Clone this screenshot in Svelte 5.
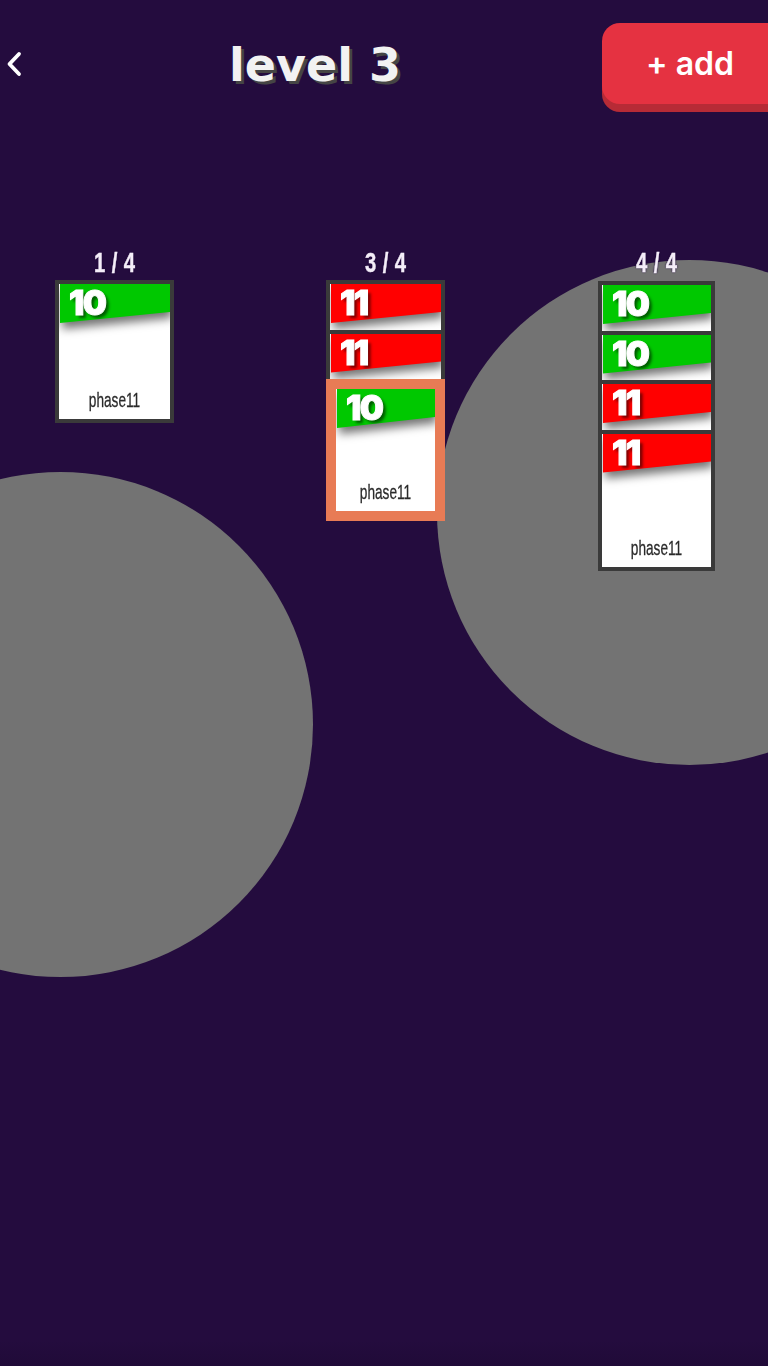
<script>
  const g = { n: '10', c: 'green' };
  const r = { n: '11', c: 'red' };
  const columns = [
    { label: '1 / 4', cards: [g], selected: false, narrow: false },
    { label: '3 / 4', cards: [r, r, g], selected: true, narrow: false },
    { label: '4 / 4', cards: [g, g, r, r], selected: false, narrow: true }
  ];
</script>

<div class="page">
  <div class="circle left"></div>
  <div class="circle right"></div>

  <header class="top">
    <button class="back" aria-label="back">
      <svg width="16" height="26" viewBox="0 0 16 26" fill="none">
        <path d="M13 3 L3.5 13 L13 23" stroke="#fff" stroke-width="3.8" stroke-linecap="round" stroke-linejoin="round" />
      </svg>
    </button>
    <h1 class="title">level 3</h1>
    <button class="add">+ add</button>
  </header>

  <main class="board">
    {#each columns as col}
      <section class="col" class:narrow={col.narrow}>
        <div class="label">{col.label}</div>
        <div class="stack">
          {#each col.cards as card, i}
            {@const last = i === col.cards.length - 1}
            <div class="slot" class:collapsed={!last}>
              <div class="card" class:selected={last && col.selected}>
                <div class="ribbon-wrap">
                  <div class="ribbon {card.c}"><span class="num">{card.n}</span></div>
                </div>
                {#if last}
                  <div class="name">phase11</div>
                {/if}
              </div>
            </div>
          {/each}
        </div>
      </section>
    {/each}
  </main>
</div>

<style>
  :global(body) {
    margin: 0;
    background: #240c3e;
  }
  .page {
    position: relative;
    width: 768px;
    height: 1366px;
    overflow: hidden;
    background: linear-gradient(#240c3e 0, #240c3e 1340px, #200a38 1366px);
    font-family: "Inter", sans-serif;
  }
  .circle {
    position: absolute;
    width: 505px;
    height: 505px;
    border-radius: 50%;
    background: #737373;
  }
  .circle.left { left: -192px; top: 472px; }
  .circle.right { left: 437px; top: 260px; }

  .top {
    position: relative;
    display: flex;
    align-items: center;
    height: 89px;
    padding-top: 23px;
  }
  .back {
    display: flex;
    align-items: center;
    width: 16px;
    margin-left: 6px;
    padding: 0;
    border: 0;
    background: none;
    position: relative;
    top: -4px;
  }
  .title {
    margin: 0 0 0 207px;
    color: #f2f2f2;
    font-family: "DejaVu Sans", sans-serif;
    font-size: 46px;
    font-weight: 700;
    letter-spacing: 0;
    line-height: 1;
    text-shadow: 3px 3px 0 #454545;
    position: relative;
    top: -3px;
    white-space: nowrap;
  }
  .add {
    margin-left: auto;
    width: 166px;
    height: 81px;
    align-self: flex-start;
    padding: 0 0 0 10px;
    border: 0;
    border-radius: 18px 0 0 18px;
    background: #e53241;
    box-shadow: 0 8px 0 #b72b36;
    color: #fff;
    font-family: "Inter", sans-serif;
    font-size: 32px;
    font-weight: 600;
    line-height: 76px;
  }

  .board {
    position: relative;
    display: flex;
    gap: 152px;
    padding: 138px 0 0 55px;
  }
  .col {
    width: 119px;
  }
  .label {
    height: 30px;
    color: #f4eef8;
    font-family: "Liberation Sans", sans-serif;
    font-size: 27px;
    font-weight: 700;
    line-height: 26px;
    text-align: center;
    word-spacing: 1px;
    -webkit-text-stroke: 0.4px #f4eef8;
    text-shadow: 0 0 2px #240c3e, 0 0 2px #240c3e;
    transform: scaleX(0.75);
  }
  .slot.collapsed {
    height: 49.5px;
    overflow: hidden;
  }
  .card {
    box-sizing: border-box;
    display: flex;
    flex-direction: column;
    width: 119px;
    height: 143px;
    border: 4px solid #3a3a3a;
    background: #fff;
    overflow: hidden;
  }
  .card.selected {
    height: 142px;
    border: 10px solid #e87b55;
  }
  .col.narrow .stack {
    margin: 1px 0 0 1px;
  }
  .col.narrow .card {
    width: 117px;
    height: 141px;
  }
  .ribbon-wrap {
    filter: drop-shadow(2px 6px 5px rgba(0, 0, 0, 0.55));
    padding-left: 1px;
  }
  .ribbon {
    height: 39px;
    padding-left: 9px;
    clip-path: polygon(0 0, 100% 0, 100% 28px, 0 100%);
  }
  .ribbon.green { background: #00c800; }
  .ribbon.red { background: #ff0000; }
  .num {
    display: block;
    color: #fff;
    font-family: "Inter", sans-serif;
    font-size: 34px;
    font-weight: 900;
    line-height: 38px;
    letter-spacing: -1.5px;
    -webkit-text-stroke: 1px #fff;
    text-shadow: 3px 3px 3px rgba(0, 0, 0, 0.55);
  }
  .name {
    margin-top: auto;
    padding-bottom: 7px;
    color: #2a2a2a;
    font-family: "Liberation Sans", sans-serif;
    font-size: 21px;
    line-height: 24px;
    text-align: center;
    -webkit-text-stroke: 0.3px #2a2a2a;
    transform: scaleX(0.65);
  }
</style>
